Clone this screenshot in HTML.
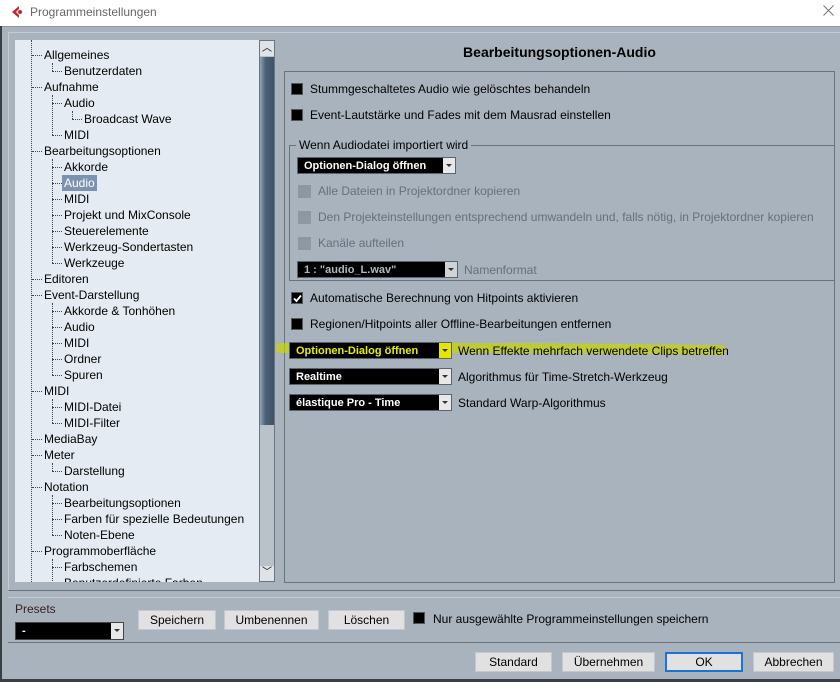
<!DOCTYPE html>
<html><head><meta charset="utf-8"><style>
*{margin:0;padding:0;box-sizing:border-box}
body{width:840px;height:682px;background:#a9b3bd;font-family:"Liberation Sans",sans-serif;font-size:12px;color:#000;position:relative;overflow:hidden}
.a{position:absolute;white-space:nowrap}
.t{position:absolute;white-space:nowrap;line-height:16px;font-size:12px}
.cb{position:absolute;width:12px;height:12px;background:#000;border:1px solid #555}
.cbd{position:absolute;width:13px;height:13px;background:#8e979f}
.dd{position:absolute;height:17px;background:#000;border:1px solid #5a646e;color:#fff;font-weight:bold;font-size:11px;line-height:16px;padding-left:6px}
.dd i{position:absolute;right:0;top:0;width:12px;height:15px;background:#e8e8e8}
.dd i:after{content:"";position:absolute;left:3px;top:6px;border:3px solid transparent;border-top:3px solid #333}
.btn{position:absolute;height:20px;background:#e1e1e1;border:1px solid #c4c8cc;text-align:center;line-height:18px;font-size:12px}
.hd{position:absolute;border-top:1px dotted #444;height:0}
.vd{position:absolute;border-left:1px dotted #444;width:0}
</style></head><body>
<div class="a" style="left:0;top:0;width:840px;height:26px;background:#fff"></div>
<svg class="a" style="left:10px;top:5px" width="14" height="14" viewBox="0 0 14 14"><path d="M9 1 L2 7 L9 13 L9 10 L6 7 L9 4Z" fill="#c0282d"/><circle cx="10" cy="7" r="2" fill="#c0282d"/></svg>
<div class="a" style="left:30px;top:5px;font-size:12px;color:#666">Programmeinstellungen</div>
<svg class="a" style="left:183px;top:5px;left:183px;display:none"></svg>
<svg class="a" style="left:823px;top:5px" width="11" height="11"><path d="M0.5 0.5 L10.5 10.5 M10.5 0.5 L0.5 10.5" stroke="#777" stroke-width="1"/></svg>
<div class="a" style="left:0;top:26px;width:840px;height:1px;background:#8f98a1"></div>
<div class="a" style="left:8px;top:32px;width:832px;height:1px;background:#c4cbd2"></div>
<div class="a" style="left:8px;top:32px;width:1px;height:560px;background:#c4cbd2"></div>
<div class="a" style="left:0;top:26px;width:2px;height:656px;background:#3a3f44"></div>
<div class="a" style="left:0;top:679px;width:840px;height:3px;background:#3a3f44"></div>

<div class="a" style="left:15px;top:40px;width:244px;height:542px;background:#e4ebf2;overflow:hidden" id="tree"></div>
<div class="a" style="left:259px;top:40px;width:16px;height:542px;background:#b9c1c9;border:1px solid #6d7680"></div>
<div class="a" style="left:260px;top:41px;width:14px;height:15px;background:#dfe3e7;text-align:center;font-size:10px;line-height:15px">︿</div>
<div class="a" style="left:260px;top:57px;width:14px;height:368px;background:linear-gradient(90deg,#8fa2b4,#4c6076 40%,#3e5167)"></div>
<div class="a" style="left:260px;top:566px;width:14px;height:15px;background:#dfe3e7;text-align:center;font-size:10px;line-height:13px">﹀</div>

<div class="a" style="left:284px;top:71px;width:551px;height:512px;border:1px solid #6a737c"></div>
<div class="a" style="left:284px;top:44px;width:551px;text-align:center;font-weight:bold;font-size:14px">Bearbeitungsoptionen-Audio</div>

<div class="cb" style="left:291px;top:83px"></div><div class="t" style="left:310px;top:81px">Stummgeschaltetes Audio wie gelöschtes behandeln</div>
<div class="cb" style="left:291px;top:109px"></div><div class="t" style="left:310px;top:107px">Event-Lautstärke und Fades mit dem Mausrad einstellen</div>

<div class="a" style="left:289px;top:145px;width:546px;height:136px;border:1px solid #6a737c;border-right:none"></div>
<div class="t" style="left:296px;top:137px;background:#a9b3bd;padding:0 3px">Wenn Audiodatei importiert wird</div>
<div class="dd" style="left:297px;top:157px;width:159px">Optionen-Dialog öffnen<i></i></div>
<div class="cbd" style="left:298px;top:185px"></div><div class="t" style="left:318px;top:183px;color:#686f77">Alle Dateien in Projektordner kopieren</div>
<div class="cbd" style="left:298px;top:211px"></div><div class="t" style="left:318px;top:209px;color:#686f77">Den Projekteinstellungen entsprechend umwandeln und, falls nötig, in Projektordner kopieren</div>
<div class="cbd" style="left:298px;top:237px"></div><div class="t" style="left:318px;top:235px;color:#686f77">Kanäle aufteilen</div>
<div class="dd" style="left:297px;top:261px;width:161px;color:#b0b8c0">1 : "audio_L.wav"<i style="background:#cfd3d7"></i></div>
<div class="t" style="left:464px;top:262px;color:#686f77">Namenformat</div>

<div class="cb" style="left:291px;top:292px"></div>
<svg class="a" style="left:292px;top:293px" width="11" height="11"><path d="M2 5.5 L4.5 8 L9 2.5" stroke="#fff" stroke-width="1.8" fill="none"/></svg>
<div class="t" style="left:310px;top:290px">Automatische Berechnung von Hitpoints aktivieren</div>
<div class="cb" style="left:291px;top:318px"></div><div class="t" style="left:310px;top:316px">Regionen/Hitpoints aller Offline-Bearbeitungen entfernen</div>

<svg class="a" style="left:276px;top:338px" width="450" height="24"><path d="M3 10 Q200 9 445 12" stroke="#c9d400" stroke-width="10" opacity="0.7" fill="none" stroke-linecap="round"/></svg>
<div class="dd" style="left:289px;top:342px;width:163px;color:#e8f000">Optionen-Dialog öffnen<i style="background:#e6e600"></i></div>
<div class="t" style="left:458px;top:343px">Wenn Effekte mehrfach verwendete Clips betreffen</div>
<div class="dd" style="left:289px;top:368px;width:163px">Realtime<i></i></div>
<div class="t" style="left:458px;top:369px">Algorithmus für Time-Stretch-Werkzeug</div>
<div class="dd" style="left:289px;top:394px;width:163px">élastique Pro - Time<i></i></div>
<div class="t" style="left:458px;top:395px">Standard Warp-Algorithmus</div>

<div class="a" style="left:8px;top:590px;width:832px;height:1px;background:#6a737c"></div>
<div class="a" style="left:8px;top:597px;width:832px;height:1px;background:#c4cbd2"></div>
<div class="t" style="left:15px;top:601px;color:#3a1e1e">Presets</div>
<div class="dd" style="left:15px;top:622px;width:109px;height:18px;border:1px solid #444">-<i style="height:16px"></i></div>
<div class="btn" style="left:138px;top:610px;width:78px">Speichern</div>
<div class="btn" style="left:224px;top:610px;width:95px">Umbenennen</div>
<div class="btn" style="left:328px;top:610px;width:77px">Löschen</div>
<div class="cb" style="left:413px;top:612px"></div>
<div class="t" style="left:433px;top:611px">Nur ausgewählte Programmeinstellungen speichern</div>
<div class="a" style="left:8px;top:642px;width:832px;height:1px;background:#6a737c"></div>
<div class="btn" style="left:475px;top:652px;width:77px">Standard</div>
<div class="btn" style="left:562px;top:652px;width:93px">Übernehmen</div>
<div class="btn" style="left:665px;top:652px;width:78px;border:2px solid #1a74d8;line-height:16px">OK</div>
<div class="btn" style="left:753px;top:652px;width:81px">Abbrechen</div>

<script>
var items=[["Allgemeines",0],["Benutzerdaten",1],["Aufnahme",0],["Audio",1],["Broadcast Wave",2],["MIDI",1],["Bearbeitungsoptionen",0],["Akkorde",1],["Audio",1],["MIDI",1],["Projekt und MixConsole",1],["Steuerelemente",1],["Werkzeug-Sondertasten",1],["Werkzeuge",1],["Editoren",0],["Event-Darstellung",0],["Akkorde & Tonhöhen",1],["Audio",1],["MIDI",1],["Ordner",1],["Spuren",1],["MIDI",0],["MIDI-Datei",1],["MIDI-Filter",1],["MediaBay",0],["Meter",0],["Darstellung",1],["Notation",0],["Bearbeitungsoptionen",1],["Farben für spezielle Bedeutungen",1],["Noten-Ebene",1],["Programmoberfläche",0],["Farbschemen",1],["Benutzerdefinierte Farben",1]];
var T=document.getElementById('tree'),h='';var ox=15,oy=40;
h+='<div class="vd" style="left:'+(31-ox)+'px;top:0;height:542px"></div>';
var last=[-1,-1,-1];
items.forEach(function(it,i){var lv=it[1],cy=55+16*i-oy,tx=44+20*lv-ox,lx=tx-12;
h+='<div class="hd" style="left:'+lx+'px;top:'+cy+'px;width:10px"></div>';
if(lv>0){var p=last[lv-1];var top=(p>=0?55+16*p-oy+8:0);h+='<div class="vd" style="left:'+lx+'px;top:'+top+'px;height:'+(cy-top)+'px"></div>';}
last[lv]=i;
var sel=(i==8);
h+='<div class="t" style="left:'+(tx-2)+'px;top:'+(cy-8)+'px;padding:0 2px;'+(sel?'background:#7b93ad;color:#fff;':'')+'">'+it[0].replace('&','&amp;')+'</div>';});
T.innerHTML=h;
</script>
</body></html>
